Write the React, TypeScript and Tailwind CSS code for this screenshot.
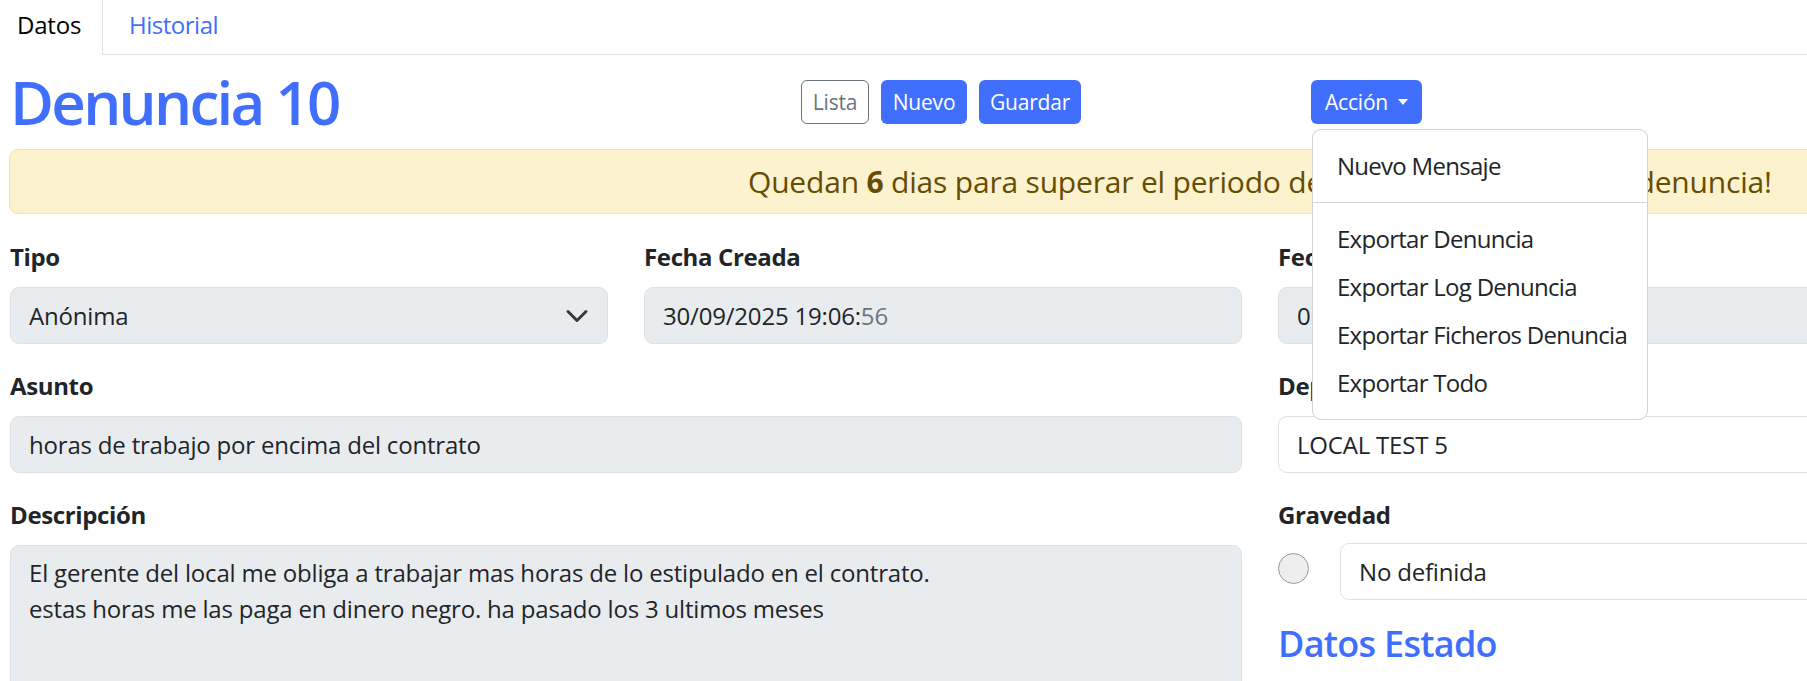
import React from 'react';

const BLUE = 'bg-[#416ffd]';

function Label({ children }: { children: React.ReactNode }) {
  return <div className="h-[36px] leading-[36px] mb-[12px] font-bold text-[#212529] tracking-[-0.015em]">{children}</div>;
}

function Field({ children, disabled = true, className = '' }: { children?: React.ReactNode; disabled?: boolean; className?: string }) {
  return (
    <div
      className={`h-[57px] flex items-center px-[18px] border border-[#dee2e6] rounded-[9px] ${disabled ? 'bg-[#e9ecef]' : 'bg-white'} ${className}`}
    >
      {children}
    </div>
  );
}

const menuItems = ['Exportar Denuncia', 'Exportar Log Denuncia', 'Exportar Ficheros Denuncia', 'Exportar Todo'];

export default function App() {
  return (
    <div className="relative w-[1807px] h-[681px] overflow-hidden bg-white text-[24px] leading-[36px] text-[#212529] tracking-[-0.008em] font-['Open_Sans','Noto_Sans',sans-serif]">
      <div className="w-[2530px]">
        {/* pestañas */}
        <div className="flex h-[55px] border-b border-[#dee2e6]">
          <div className="w-[103px] h-[55px] -mb-px bg-white border-r border-[#dee2e6] flex items-center pl-[17px] pb-[5px] text-black">
            Datos
          </div>
          <div className="flex items-center pl-[26px] pb-[5px] text-[#416ffd] tracking-[-0.02em]">Historial</div>
        </div>

        {/* cabecera */}
        <div className="flex items-center h-[94px] pl-[10px]">
          <h1 className="w-[791px] text-[60px] leading-[72px] font-semibold text-[#416ffd] tracking-[-0.045em]">Denuncia 10</h1>
          <div className="flex gap-[12px] text-[21px] leading-[31px]">
            <button className="h-[44px] w-[68px] rounded-[6px] border border-[#6c757d] text-[#6c757d] bg-white">Lista</button>
            <button className={`h-[44px] w-[86px] rounded-[6px] ${BLUE} text-white`}>Nuevo</button>
            <button className={`h-[44px] w-[102px] rounded-[6px] ${BLUE} text-white`}>Guardar</button>
          </div>
          <button className={`ml-[230px] h-[44px] w-[111px] rounded-[6px] ${BLUE} text-white text-[21px] flex items-center justify-center gap-[10px]`}>
            <span>Acción</span>
            <span className="w-0 h-0 border-l-[5.5px] border-r-[5.5px] border-t-[6px] border-l-transparent border-r-transparent border-t-white" />
          </button>
        </div>

        {/* aviso */}
        <div className="ml-[9px] w-[2502px] h-[65px] flex items-center pl-[738px] bg-[#fcf2cd] border border-[#fbe29a] rounded-[9px] text-[30px] text-[#664d03]">
          <span>
            Quedan <b className="font-bold">6</b> dias para superar el periodo de acuse de recibo de su denuncia!
          </span>
        </div>

        {/* formulario */}
        <div className="pl-[10px] pt-[25px]">
          <div className="flex gap-[36px]">
            <div className="w-[598px]">
              <Label>Tipo</Label>
              <Field className="justify-between">
                <span>Anónima</span>
                <svg width="24" height="18" viewBox="0 0 16 12">
                  <path d="M2 3l6 6 6-6" fill="none" stroke="#343a40" strokeWidth="2" strokeLinecap="round" strokeLinejoin="round" />
                </svg>
              </Field>
            </div>
            <div className="w-[598px]">
              <Label>Fecha Creada</Label>
              <Field>
                <span>
                  30/09/2025 19:06:<span className="text-[#6c757d]">56</span>
                </span>
              </Field>
            </div>
            <div className="w-[598px]">
              <Label>Fecha Actualizada</Label>
              <Field>
                <span>01/10/2025 10:12:04</span>
              </Field>
            </div>
          </div>

          <div className="flex gap-[36px] mt-[24px]">
            <div className="w-[1232px]">
              <Label>Asunto</Label>
              <Field>horas de trabajo por encima del contrato</Field>
            </div>
            <div className="w-[598px]">
              <Label>Departamento</Label>
              <Field disabled={false}>LOCAL TEST 5</Field>
            </div>
          </div>

          <div className="flex gap-[36px] mt-[24px]">
            <div className="w-[1232px]">
              <Label>Descripción</Label>
              <div className="h-[220px] px-[18px] py-[9px] bg-[#e9ecef] border border-[#dee2e6] rounded-[9px]">
                <p>El gerente del local me obliga a trabajar mas horas de lo estipulado en el contrato.</p>
                <p>estas horas me las paga en dinero negro. ha pasado los 3 ultimos meses</p>
              </div>
            </div>
            <div className="w-[598px]">
              <Label>Gravedad</Label>
              <div className="flex items-start gap-[31px]">
                <div className="mt-[8px] w-[31px] h-[31px] shrink-0 rounded-full bg-[#eeeeee] border border-[#9a9a9a]" />
                <Field disabled={false} className="flex-1 -mt-[2px] h-[56px]">No definida</Field>
              </div>
              <h3 className="mt-[22px] text-[36px] leading-[44px] font-semibold text-[#416ffd] tracking-[-0.02em]">Datos Estado</h3>
            </div>
          </div>
        </div>
      </div>

      {/* menú desplegable de Acción */}
      <div className="absolute left-[1312px] top-[129px] w-[336px] py-[12px] bg-white border border-[#d3d3d3] rounded-[9px] whitespace-nowrap tracking-[-0.03em]">
        <div className="h-[48px] flex items-center px-[24px]">Nuevo Mensaje</div>
        <div className="my-[12px] border-t border-[#d3d3d3]" />
        {menuItems.map((item) => (
          <div key={item} className="h-[48px] flex items-center px-[24px]">
            {item}
          </div>
        ))}
      </div>
    </div>
  );
}
